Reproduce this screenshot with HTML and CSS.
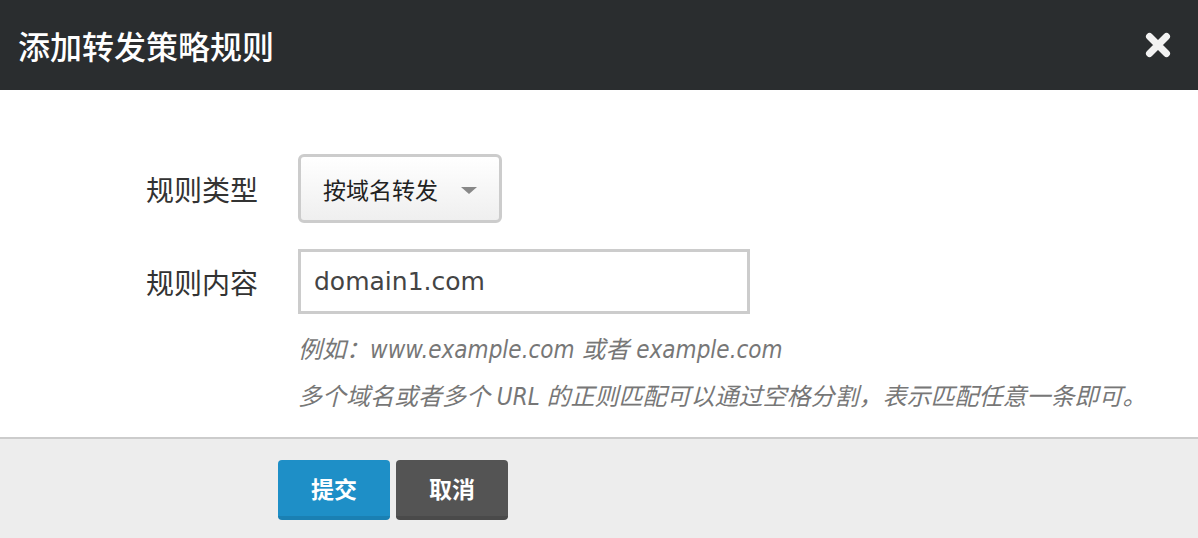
FILE: index.html
```html
<!DOCTYPE html>
<html lang="zh">
<head>
<meta charset="utf-8">
<title>添加转发策略规则</title>
<link rel="stylesheet" href="styles.css">
</head>
<body>
<div class="dialog">
  <div class="dlg-header">
    <h1 class="dlg-title">添加转发策略规则</h1>
    <span class="dlg-close">
      <svg width="26" height="26" viewBox="0 0 26 26"><path d="M4.5 4.5 L21.5 21.5 M21.5 4.5 L4.5 21.5" stroke="#f2f2f2" stroke-width="7" stroke-linecap="round" fill="none"/></svg>
    </span>
  </div>
  <div class="dlg-body">
    <div class="form-row row-type">
      <label class="form-label">规则类型</label>
      <div class="select">
        <span class="select-text">按域名转发</span>
        <span class="caret"></span>
      </div>
    </div>
    <div class="form-row row-content">
      <label class="form-label">规则内容</label>
      <div class="input">domain1.com</div>
    </div>
    <div class="hints">
      <p class="hint">例如：www.example.com 或者 example.com</p>
      <p class="hint">多个域名或者多个 URL 的正则匹配可以通过空格分割，表示匹配任意一条即可。</p>
    </div>
  </div>
  <div class="dlg-footer">
    <button class="btn btn-primary">提交</button>
    <button class="btn btn-dark">取消</button>
  </div>
</div>
</body>
</html>
```
FILE: styles.css
```css
html, body {
  margin: 0;
  padding: 0;
  background: #ffffff;
}
body {
  font-family: "DejaVu Sans", "Noto Sans CJK SC", sans-serif;
  width: 1198px;
  height: 538px;
  overflow: hidden;
}
.dialog {
  display: flex;
  flex-direction: column;
  height: 538px;
}
.dlg-header {
  height: 90px;
  background: #2a2d2f;
  display: flex;
  align-items: center;
  justify-content: space-between;
  padding: 0 27px 0 18px;
  flex: none;
}
.dlg-title {
  margin: 0;
  font-family: "Noto Sans CJK SC", sans-serif;
  font-weight: 500;
  font-size: 32px;
  color: #ffffff;
  letter-spacing: 0;
  line-height: 1;
}
.dlg-close {
  display: flex;
  width: 26px;
  height: 26px;
}
.dlg-body {
  height: 347px;
  padding: 64px 0 0 146px;
  box-sizing: border-box;
  flex: none;
}
.form-row {
  display: grid;
  grid-template-columns: 152px auto;
  align-items: center;
  justify-content: start;
}
.form-label {
  font-family: "Noto Sans CJK SC", sans-serif;
  font-size: 28px;
  color: #333333;
  line-height: 1;
}
.row-content {
  margin-top: 26px;
}
.select {
  width: 204px;
  height: 69px;
  box-sizing: border-box;
  border: 3px solid #cccccc;
  border-radius: 6px;
  background: linear-gradient(#ffffff, #efefef);
  display: flex;
  align-items: center;
  padding: 0 22px 0 22px;
  justify-content: space-between;
}
.select-text {
  font-family: "Noto Sans CJK SC", sans-serif;
  font-size: 23px;
  color: #222222;
}
.caret {
  width: 0;
  height: 0;
  border-left: 8px solid transparent;
  border-right: 8px solid transparent;
  border-top: 7px solid #888888;
  margin-top: 3px;
}
.input {
  width: 452px;
  height: 65px;
  box-sizing: border-box;
  border: 3px solid #cccccc;
  padding: 0 13px;
  display: flex;
  align-items: center;
  font-family: "DejaVu Sans", sans-serif;
  font-size: 25px;
  color: #444444;
}
.hints {
  margin: 13px 0 0 152px;
}
.hint {
  margin: 0;
  font-family: "DejaVu Sans Condensed", "DejaVu Sans", "Noto Sans CJK SC", sans-serif;
  font-stretch: condensed;
  font-style: italic;
  font-size: 24px;
  line-height: 47px;
  color: #777777;
  white-space: nowrap;
}
.dlg-footer {
  flex: 1;
  background: #ededed;
  border-top: 2px solid #cccccc;
  padding: 21px 0 0 278px;
  display: flex;
  align-items: flex-start;
  gap: 6px;
}
.btn {
  width: 112px;
  height: 60px;
  border: 0;
  border-radius: 4px;
  font-family: "Noto Sans CJK SC", sans-serif;
  font-weight: 700;
  font-size: 23px;
  color: #ffffff;
  padding: 0;
  margin: 0;
  box-sizing: border-box;
}
.btn-primary {
  background: #1e8fc7;
  border-bottom: 4px solid #1a80b3;
}
.btn-dark {
  background: #545454;
  border-bottom: 4px solid #4a4a4a;
}
```
